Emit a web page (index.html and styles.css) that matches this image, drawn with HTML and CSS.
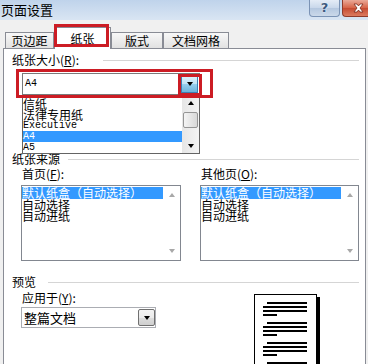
FILE: index.html
```html
<!doctype html>
<html lang="zh-CN">
<head>
	<meta charset="UTF-8">
	<title>页面设置</title>
<link rel="stylesheet" href="styles.css">
</head>
<body>
<div class="titlebar">
	<span class="title">页面设置</span>
	<span class="btn-help">?</span>
	<span class="btn-close">
		<svg width="11" height="10" viewBox="0 0 11 10"><path d="M1 1h3l1.5 2 1.5-2h3l-3 4 3 4h-3l-1.5-2-1.5 2h-3l3-4z" fill="#fff" stroke="#7a2a1c" stroke-width="0.8"/></svg>
	</span>
</div>
<div class="tabs">
	<div class="tab t1">页边距</div>
	<div class="tab active">纸张<span class="mark mark-tab"></span></div>
	<div class="tab t3">版式</div>
	<div class="tab t4">文档网格</div>
</div>
<div class="panel">
	<div class="group g-size"><span class="glabel">纸张大小(<u>R</u>):</span><i class="rule"></i></div>
	<div class="combo combo-size">
		<span class="combo-text mono">A4</span>
		<span class="drop blue"><i class="tri"></i><span class="mark mark-btn"></span></span>
		<span class="mark mark-combo"></span>
		<div class="droplist">
			<div class="items">
				<div class="item">信纸</div>
				<div class="item">法律专用纸</div>
				<div class="item mono">Executive</div>
				<div class="item mono sel">A4</div>
				<div class="item mono">A5</div>
			</div>
			<div class="sb">
				<span class="sb-btn up-btn"><i class="tri up"></i></span>
				<span class="thumb"></span>
				<span class="sb-fill"></span>
				<span class="sb-btn down-btn"><i class="tri"></i></span>
			</div>
		</div>
	</div>

	<div class="group g-src"><span class="glabel">纸张来源</span><i class="rule"></i></div>
	<div class="cols">
		<div class="col">
			<div class="label">首页(<u>F</u>):</div>
			<div class="list list-l">
				<div class="items">
					<div class="litem sel">默认纸盒（自动选择）</div>
					<div class="litem">自动选择</div>
					<div class="litem">自动进纸</div>
				</div>
				<div class="sb-off"><i class="tri up off"></i><i class="tri off"></i></div>
			</div>
		</div>
		<div class="col">
			<div class="label">其他页(<u>O</u>):</div>
			<div class="list list-r">
				<div class="items">
					<div class="litem sel">默认纸盒（自动选择）</div>
					<div class="litem">自动选择</div>
					<div class="litem">自动进纸</div>
				</div>
				<div class="sb-off"><i class="tri up off"></i><i class="tri off"></i></div>
			</div>
		</div>
	</div>

	<div class="group g-pre"><span class="glabel">预览</span><i class="rule"></i></div>
	<div class="preview-row">
		<div class="apply">
			<div class="label">应用于(<u>Y</u>):</div>
			<div class="combo combo-apply">
				<span class="combo-text big">整篇文档</span>
				<span class="drop gray"><i class="tri"></i></span>
			</div>
		</div>
		<div class="page">
			<svg width="61" height="88" viewBox="0 0 61 88">
				<g fill="#000">
					<rect x="12" y="7" width="40" height="2"/><rect x="8" y="11" width="44" height="2"/><rect x="8" y="15" width="44" height="2"/><rect x="8" y="19" width="14" height="2"/>
					<rect x="12" y="27" width="40" height="2"/><rect x="8" y="31" width="44" height="2"/><rect x="8" y="35" width="44" height="2"/><rect x="8" y="39" width="14" height="2"/>
					<rect x="12" y="47" width="40" height="2"/><rect x="8" y="51" width="44" height="2"/><rect x="8" y="55" width="44" height="2"/><rect x="8" y="59" width="14" height="2"/>
					<rect x="12" y="67" width="40" height="2"/><rect x="8" y="71" width="44" height="2"/><rect x="8" y="75" width="44" height="2"/><rect x="8" y="79" width="14" height="2"/>
				</g>
			</svg>
		</div>
	</div>
</div>
</body>
</html>
```

FILE: styles.css
```css
*{
	margin:0;
	padding:0;
}
body{
	width:368px;
	height:364px;
	overflow:hidden;
	background:#f0f0f0;
	font:12px/12px "Noto Sans CJK SC", sans-serif;
	color:#000;
}
u{
	text-decoration:underline;
}
.mono{
	font-family:"Liberation Mono", monospace;
	font-size:10px;
}
/* 标题栏 */
.titlebar{
	height:20px;
	display:flex;
	background:linear-gradient(#bfd3eb,#d9e5f3);
}
.title{
	flex:1;
	padding-left:1px;
	font-size:13px;
	line-height:20px;
}
.btn-help{
	width:31px;
	height:17px;
	box-sizing:border-box;
	margin-right:2px;
	border:1px solid #7b93b5;
	border-top:none;
	border-radius:0 0 4px 4px;
	background:linear-gradient(#e4ecf6,#c8d7ea 50%,#b4c7df 51%,#cbd9ea);
	text-align:center;
	font:bold 13px/16px "DejaVu Sans", sans-serif;
	color:#3d5a80;
	text-shadow:0 0 2px #fff;
}
.btn-close{
	width:26px;
	height:17px;
	box-sizing:border-box;
	border:1px solid #8f3b2b;
	border-top:none;
	border-right:none;
	border-radius:0 0 0 4px;
	background:linear-gradient(#eaa998,#d66246 50%,#c54a31 51%,#dc7b60);
	display:flex;
	align-items:center;
	padding-left:10px;
}
/* 选项卡 */
.tabs{
	height:28px;
	display:flex;
	align-items:flex-end;
	padding-left:5px;
}
.tab{
	box-sizing:border-box;
	height:16px;
	border:1px solid #898c95;
	border-bottom:none;
	background:linear-gradient(#f8f8f8,#e1e1e1);
	text-align:center;
	line-height:14px;
	padding-top:1px;
}
.t1{
	width:49px;
}
.active{
	width:57px;
	height:22px;
	margin-bottom:-1px;
	padding-top:5px;
	line-height:12px;
	background:#fff;
	position:relative;
	z-index:1;
}
.t3{
	width:52px;
}
.t4{
	width:66px;
}
/* 红色标注框 */
.mark{
	position:absolute;
	border:3px solid #cc1c24;
	z-index:3;
}
.mark-tab{
	left:-1px;
	top:-4px;
	right:1px;
	bottom:2px;
}
.mark-combo{
	left:-7px;
	right:-14px;
	top:-5px;
	bottom:-4px;
}
.mark-btn{
	left:-4px;
	right:-5px;
	top:-1px;
	bottom:-4px;
}
/* 面板 */
.panel{
	margin-left:3px;
	width:363px;
	height:316px;
	box-sizing:border-box;
	border:1px solid #898c95;
	border-bottom:none;
	background:#fff;
	padding-top:5px;
	overflow:hidden;
}
.group{
	display:flex;
	align-items:center;
	height:12px;
	margin:0 6px 0 8px;
}
.glabel{
	white-space:nowrap;
}
.rule{
	flex:1;
	border-top:1px solid #d5d5d5;
}
.g-size .glabel{
	width:91px;
}
.g-src{
	margin-top:58px;
}
.g-src .glabel{
	width:56px;
}
.g-pre{
	margin-top:15px;
}
.g-pre .glabel{
	width:36px;
}
.combo{
	position:relative;
	display:flex;
	align-items:flex-start;
	box-sizing:border-box;
	border:1px solid #7a7a7a;
	background:#fff;
}
.combo-size{
	margin:7px 0 0 18px;
	width:178px;
	height:22px;
}
.combo-text{
	flex:1;
	padding-left:2px;
	line-height:20px;
}
.drop{
	position:relative;
	box-sizing:border-box;
	width:17px;
	display:flex;
	align-items:center;
	justify-content:center;
}
.blue{
	height:19px;
	margin-right:1px;
	border:1px solid #3c7fb1;
	background:linear-gradient(#e3f3fc,#c2e4f6 50%,#99d0ee 51%,#6cb4dc);
}
.tri{
	width:0;
	height:0;
	border-left:3.5px solid transparent;
	border-right:3.5px solid transparent;
	border-top:4px solid #000;
}
.tri.up{
	border-top:none;
	border-bottom:4px solid #000;
}
.tri.off{
	border-top-color:#a8a8a8;
	border-bottom-color:#a8a8a8;
}
/* 下拉列表 */
.droplist{
	position:absolute;
	left:-1px;
	top:21px;
	width:178px;
	height:59px;
	box-sizing:border-box;
	border:1px solid #646464;
	background:#fff;
	display:flex;
	z-index:2;
}
.items{
	flex:1;
	padding-top:2px;
}
.item{
	height:11px;
	line-height:11px;
	white-space:nowrap;
}
.sel{
	background:#3399ff;
	color:#fff;
}
.sb{
	width:17px;
	display:flex;
	flex-direction:column;
	background:linear-gradient(90deg,#e6e6e6,#f4f4f4);
}
.sb-btn{
	display:flex;
	align-items:center;
	justify-content:center;
}
.up-btn{
	height:14px;
}
.down-btn{
	height:15px;
}
.thumb{
	height:16px;
	margin:2px 1px 0;
	box-sizing:border-box;
	border:1px solid #959595;
	border-radius:2px;
	background:linear-gradient(90deg,#f4f4f4,#d8d8d8);
}
.sb-fill{
	flex:1;
}
/* 纸张来源 */
.cols{
	display:flex;
	gap:19px;
	margin:3px 0 0 17px;
}
.label{
	height:12px;
	padding-left:1px;
	white-space:nowrap;
}
.col .label{
	margin-bottom:5px;
}
.list{
	height:76px;
	box-sizing:border-box;
	border:1px solid #828790;
	background:#fff;
	display:flex;
}
.list-l{
	width:160px;
}
.list-r{
	width:159px;
}
.list .items{
	padding-top:1px;
}
.litem{
	height:11.5px;
	line-height:11.5px;
	white-space:nowrap;
}
.sb-off{
	width:17px;
	display:flex;
	flex-direction:column;
	justify-content:space-between;
	align-items:center;
	padding:7px 0;
}
/* 预览 */
.preview-row{
	display:flex;
	align-items:flex-start;
}
.apply{
	margin-left:17px;
}
.apply .label{
	margin-top:4px;
}
.combo-apply{
	margin-top:3px;
	width:135px;
	height:21px;
	border-color:#abadb3;
}
.big{
	font-size:13px;
	line-height:19px;
}
.gray{
	height:17px;
	margin-top:1px;
	border:1px solid #707070;
	border-radius:2px;
	background:linear-gradient(#f3f3f3,#ebebeb 50%,#dddddd 51%,#cfcfcf);
}
.page{
	margin:6px 48px 0 auto;
	width:63px;
	height:90px;
	box-sizing:border-box;
	border:1px solid #000;
	background:#fff;
	box-shadow:3px 3px 0 #000;
}
.page svg{
	display:block;
}
```
